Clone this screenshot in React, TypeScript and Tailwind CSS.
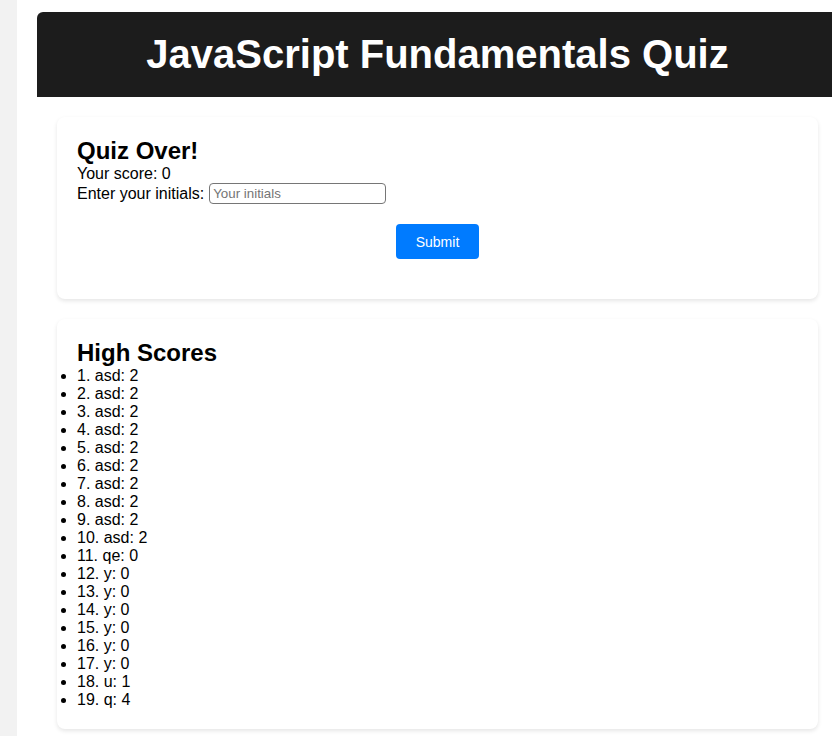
const scores = [
  "asd: 2", "asd: 2", "asd: 2", "asd: 2", "asd: 2", "asd: 2", "asd: 2", "asd: 2", "asd: 2", "asd: 2",
  "qe: 0", "y: 0", "y: 0", "y: 0", "y: 0", "y: 0", "y: 0", "u: 1", "q: 4",
];

export default function App() {
  return (
    <div className="w-[832px] h-[736px] overflow-hidden bg-[#f2f2f2] font-['Liberation_Sans',Arial,sans-serif] text-black">
      <div className="ml-[17px] w-[900px] min-h-[736px] bg-white pl-5 pt-3">
        <div className="w-[801px]">
          <header className="bg-[#1c1c1c] rounded-t-md">
            <h1 className="p-5 text-center text-[40px] font-bold leading-[45px] text-white">JavaScript Fundamentals Quiz</h1>
          </header>

          <main className="px-5 pt-5 flex flex-col gap-5">
            <section className="bg-white rounded-lg shadow-[0_2px_4px_rgba(0,0,0,0.1)] p-5">
              <h2 className="text-2xl font-bold leading-[28px]">Quiz Over!</h2>
              <p className="text-base leading-[18px]">Your score: 0</p>
              <div className="text-base leading-[21px] flex items-center gap-[5px]">
                <label htmlFor="initials">Enter your initials:</label>
                <input
                  id="initials"
                  placeholder="Your initials"
                  className="w-[177px] h-[21px] border border-[#767676] rounded-sm px-[3px] text-[13.33px] placeholder:text-[#757575]"
                />
              </div>
              <div className="flex justify-center my-5">
                <button className="h-[35px] px-5 bg-[#007bff] text-white text-sm rounded">Submit</button>
              </div>
            </section>

            <section className="bg-white rounded-lg shadow-[0_2px_4px_rgba(0,0,0,0.1)] p-5">
              <h2 className="text-2xl font-bold leading-[28px]">High Scores</h2>
              <ul className="list-disc text-base leading-[18px]">
                {scores.map((s, i) => (
                  <li key={i}>{i + 1}. {s}</li>
                ))}
              </ul>
            </section>
          </main>
        </div>
      </div>
    </div>
  );
}
